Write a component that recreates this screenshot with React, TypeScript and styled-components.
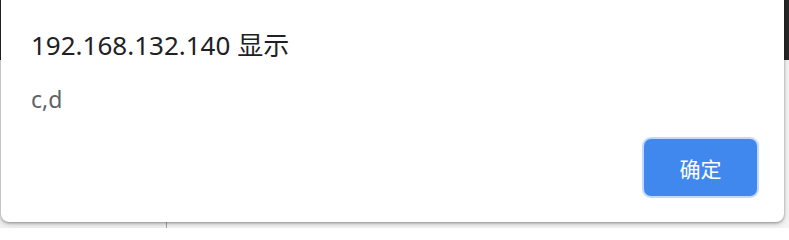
import React from 'react';
import styled, { createGlobalStyle } from 'styled-components';

const GlobalStyle = createGlobalStyle`
  html, body {
    margin: 0;
    padding: 0;
    width: 789px;
    height: 228px;
    overflow: hidden;
    font-family: "Noto Sans", "Noto Sans CJK SC", sans-serif;
  }
`;

const Page = styled.div`
  position: relative;
  width: 789px;
  height: 228px;
  background: #f3f3f3;
  display: flex;
  flex-direction: column;
`;

const Header = styled.div`
  height: 60px;
  background: #262626;
`;

const PageBody = styled.div`
  flex: 1;
  display: flex;
`;

const Sidebar = styled.div`
  width: 166px;
  border-right: 1px solid #a8a8a8;
  background: #f1f1f1;
`;

const Content = styled.div`
  flex: 1;
  background: #f4f4f4;
`;

const Dialog = styled.div`
  position: absolute;
  left: 1px;
  top: -8px;
  width: 783px;
  height: 230px;
  box-sizing: border-box;
  background: #fff;
  border-radius: 8px;
  box-shadow: 0 1px 3px rgba(0, 0, 0, 0.35), 0 2px 6px rgba(0, 0, 0, 0.15);
  display: flex;
  flex-direction: column;
  padding: 37px 27px 26px 30px;
`;

const Title = styled.div`
  font-size: 26px;
  line-height: 32px;
  color: #202124;
  font-family: "Noto Sans", "Noto Sans CJK SC", sans-serif;
`;

const Message = styled.div`
  margin-top: 23px;
  font-size: 23px;
  line-height: 30px;
  color: #5f6368;
`;

const Footer = styled.div`
  margin-top: auto;
  display: flex;
  justify-content: flex-end;
`;

const OkButton = styled.button`
  width: 113px;
  height: 57px;
  border: none;
  border-radius: 7px;
  background: #4188ee;
  color: #fff;
  font-family: "Noto Sans CJK SC", sans-serif;
  font-size: 21px;
  box-shadow: 0 0 0 2px #c2dafc;
  cursor: pointer;
`;

export default function App() {
  return (
    <>
      <GlobalStyle />
      <Page>
        <Header />
        <PageBody>
          <Sidebar />
          <Content />
        </PageBody>
        <Dialog>
          <Title>192.168.132.140 显示</Title>
          <Message>c,d</Message>
          <Footer>
            <OkButton>确定</OkButton>
          </Footer>
        </Dialog>
      </Page>
    </>
  );
}
